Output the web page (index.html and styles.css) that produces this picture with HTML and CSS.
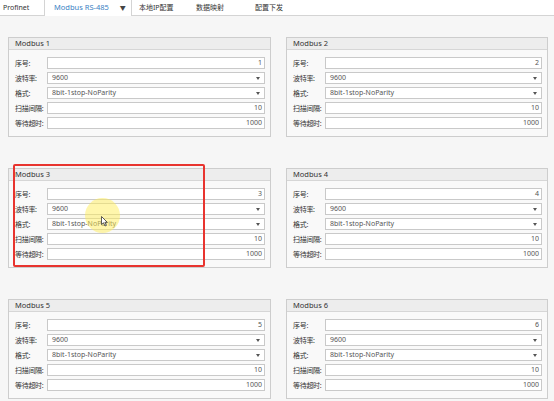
FILE: index.html
```html
<!DOCTYPE html>
<html lang="zh">
<head>
<meta charset="utf-8">
<link rel="stylesheet" href="styles.css">
</head>
<body>
<div class="tabs">
  <div class="tab first">Profinet</div>
  <div class="tab active">Modbus RS-485<span class="caret">▼</span></div>
  <div class="tab t3">本地IP配置</div>
  <div class="tab t4">数据映射</div>
  <div class="tab t5">配置下发</div>
</div>
<main class="grid">
  <section class="panel">
    <div class="phead">Modbus 1</div>
    <div class="pbody">
      <div class="row"><span class="lbl">序号:</span><div class="inp num">1</div></div>
      <div class="row"><span class="lbl">波特率:</span><div class="inp sel">9600<span class="arr"></span></div></div>
      <div class="row"><span class="lbl">格式:</span><div class="inp sel">8bit-1stop-NoParity<span class="arr"></span></div></div>
      <div class="row"><span class="lbl">扫描间隔:</span><div class="inp num">10</div></div>
      <div class="row"><span class="lbl">等待超时:</span><div class="inp num">1000</div></div>
    </div>
  </section>
  <section class="panel">
    <div class="phead">Modbus 2</div>
    <div class="pbody">
      <div class="row"><span class="lbl">序号:</span><div class="inp num">2</div></div>
      <div class="row"><span class="lbl">波特率:</span><div class="inp sel">9600<span class="arr"></span></div></div>
      <div class="row"><span class="lbl">格式:</span><div class="inp sel">8bit-1stop-NoParity<span class="arr"></span></div></div>
      <div class="row"><span class="lbl">扫描间隔:</span><div class="inp num">10</div></div>
      <div class="row"><span class="lbl">等待超时:</span><div class="inp num">1000</div></div>
    </div>
  </section>
  <section class="panel">
    <div class="phead">Modbus 3</div>
    <div class="pbody">
      <div class="row"><span class="lbl">序号:</span><div class="inp num">3</div></div>
      <div class="row"><span class="lbl">波特率:</span><div class="inp sel">9600<span class="arr"></span></div></div>
      <div class="row"><span class="lbl">格式:</span><div class="inp sel">8bit-1stop-NoParity<span class="arr"></span></div></div>
      <div class="row"><span class="lbl">扫描间隔:</span><div class="inp num">10</div></div>
      <div class="row"><span class="lbl">等待超时:</span><div class="inp num">1000</div></div>
    </div>
  </section>
  <section class="panel">
    <div class="phead">Modbus 4</div>
    <div class="pbody">
      <div class="row"><span class="lbl">序号:</span><div class="inp num">4</div></div>
      <div class="row"><span class="lbl">波特率:</span><div class="inp sel">9600<span class="arr"></span></div></div>
      <div class="row"><span class="lbl">格式:</span><div class="inp sel">8bit-1stop-NoParity<span class="arr"></span></div></div>
      <div class="row"><span class="lbl">扫描间隔:</span><div class="inp num">10</div></div>
      <div class="row"><span class="lbl">等待超时:</span><div class="inp num">1000</div></div>
    </div>
  </section>
  <section class="panel">
    <div class="phead">Modbus 5</div>
    <div class="pbody">
      <div class="row"><span class="lbl">序号:</span><div class="inp num">5</div></div>
      <div class="row"><span class="lbl">波特率:</span><div class="inp sel">9600<span class="arr"></span></div></div>
      <div class="row"><span class="lbl">格式:</span><div class="inp sel">8bit-1stop-NoParity<span class="arr"></span></div></div>
      <div class="row"><span class="lbl">扫描间隔:</span><div class="inp num">10</div></div>
      <div class="row"><span class="lbl">等待超时:</span><div class="inp num">1000</div></div>
    </div>
  </section>
  <section class="panel">
    <div class="phead">Modbus 6</div>
    <div class="pbody">
      <div class="row"><span class="lbl">序号:</span><div class="inp num">6</div></div>
      <div class="row"><span class="lbl">波特率:</span><div class="inp sel">9600<span class="arr"></span></div></div>
      <div class="row"><span class="lbl">格式:</span><div class="inp sel">8bit-1stop-NoParity<span class="arr"></span></div></div>
      <div class="row"><span class="lbl">扫描间隔:</span><div class="inp num">10</div></div>
      <div class="row"><span class="lbl">等待超时:</span><div class="inp num">1000</div></div>
    </div>
  </section>
</main>
<div class="redbox"></div>
<div class="spot"></div>
<svg class="cursor" width="7" height="11" viewBox="0 0 7 11"><path d="M0.5 0.5 L0.5 8.5 L2.5 6.8 L4 10 L5.3 9.4 L3.9 6.3 L6.3 6.3 Z" fill="#fff" stroke="#333" stroke-width="0.8"/></svg>
</body>
</html>
```
FILE: styles.css
```css
* { box-sizing: border-box; }
html, body { margin: 0; padding: 0; }
body {
  width: 554px;
  height: 401px;
  overflow: hidden;
  background: #f6f6f6;
  font-family: "Noto Sans", "Noto Sans CJK SC", sans-serif;
  color: #333;
  position: relative;
}
.tabs {
  display: flex;
  height: 16px;
  background: #fff;
  border-bottom: 1px solid #d4d4d4;
  font-size: 7px;
  font-family: "Noto Sans", "Noto Sans CJK SC", sans-serif;
}
.tab {
  height: 16px;
  line-height: 15px;
  padding: 0 3px;
  color: #333;
  white-space: nowrap;
}
.tab.first {
  width: 45px;
  border-right: 1px solid #d4d4d4;
  padding-left: 3px;
}
.tab.active {
  width: 87px;
  padding-left: 9px;
  color: #3b7fc4;
  background: #fff;
  border-right: 1px solid #d4d4d4;
  height: 16px;
  font-size: 7.5px;
}
.caret {
  color: #444;
  font-size: 6px;
  margin-left: 11px;
}
.tab.t3 { margin-left: 4px; width: 57px; }
.tab.t4 { width: 59px; }
.tab.t5 { }

.grid {
  display: grid;
  grid-template-columns: 263px 262px;
  column-gap: 15px;
  row-gap: 31px;
  padding: 21px 0 0 8px;
}
.panel {
  border: 1px solid #cdcdcd;
  background: #f9f9f9;
  height: 100px;
}
.phead {
  height: 12px;
  line-height: 11px;
  background: #ededed;
  border-bottom: 1px solid #d6d6d6;
  padding-left: 6px;
  font-size: 7.5px;
  color: #333;
}
.pbody {
  display: flex;
  flex-direction: column;
  gap: 3px;
  padding: 7px 5px 0 6px;
}
.row {
  display: flex;
  height: 12px;
  align-items: center;
}
.lbl {
  width: 32px;
  flex: none;
  font-size: 7px;
  color: #333;
  font-family: "Noto Sans CJK SC", sans-serif;
  white-space: nowrap;
  letter-spacing: -0.3px;
}
.inp {
  flex: 1;
  height: 12px;
  border: 1px solid #c9c9c9;
  background: #fff;
  font-size: 7px;
  line-height: 10px;
  color: #555;
  padding: 0 3px;
  position: relative;
  white-space: nowrap;
}
.inp.num { text-align: right; padding-right: 2px; }
.inp.sel { padding-left: 4px; }
.arr {
  position: absolute;
  right: 4px;
  top: 4px;
  width: 0;
  height: 0;
  border-left: 2.5px solid transparent;
  border-right: 2.5px solid transparent;
  border-top: 3px solid #555;
}
.redbox {
  position: absolute;
  left: 13px;
  top: 164px;
  width: 192px;
  height: 103px;
  border: 2px solid #e8342f;
  border-radius: 2px;
}
.spot {
  position: absolute;
  left: 85px;
  top: 198px;
  width: 35px;
  height: 35px;
  border-radius: 50%;
  background: rgba(255, 238, 90, 0.5);
}
.cursor {
  position: absolute;
  left: 101px;
  top: 216px;
}
```
